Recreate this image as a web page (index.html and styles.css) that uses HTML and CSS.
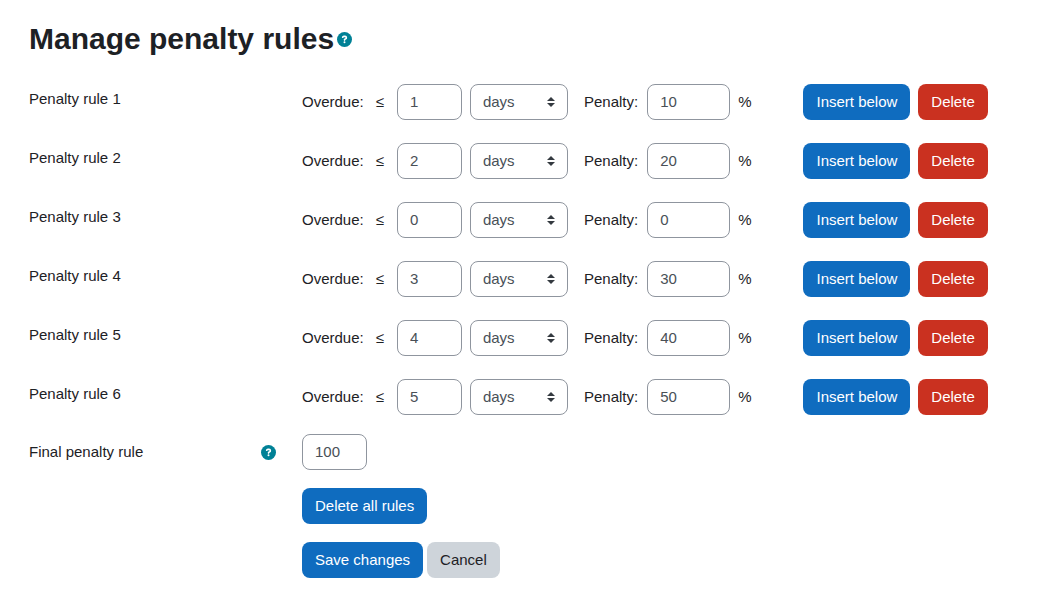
FILE: index.html
```html
<!DOCTYPE html>
<html lang="en">
<head>
<meta charset="utf-8">
<meta name="viewport" content="width=device-width, initial-scale=1">
<title>Manage penalty rules</title>
<link rel="stylesheet" href="styles.css">
</head>
<body>
<svg class="sprite" aria-hidden="true">
  <symbol id="help" viewBox="0 0 512 512">
    <path fill="currentColor" d="M256 0a256 256 0 1 0 0 512a256 256 0 1 0 0-512z"/>
    <path fill="none" stroke="#fff" stroke-width="54" stroke-linecap="round" stroke-linejoin="round" d="M194 180c6-22 20-32 42-32h36c28 0 48 18 48 44c0 20-10 34-28 44l-34 20v20"/>
    <circle fill="#fff" cx="256" cy="352" r="34"/>
  </symbol>
</svg>
<main class="page">
  <header class="heading">
    <h1 class="title">Manage penalty rules</h1>
    <button class="help" type="button" aria-label="Help with Manage penalty rules"><svg class="help-icon"><use href="#help"/></svg></button>
  </header>
  <form class="form">
    <div class="rules">
      <div class="row" role="group" aria-labelledby="rule1">
        <div class="row-label" id="rule1">Penalty rule 1</div>
        <div class="fields">
          <label class="overdue" for="overdue1">Overdue:</label><span class="sign">≤</span>
          <input class="control short" id="overdue1" type="text" value="1">
          <select class="control unit" aria-label="Time unit"><option>days</option><option>weeks</option></select>
          <label class="penalty" for="penalty1">Penalty:</label>
          <input class="control wide" id="penalty1" type="text" value="10"><span class="percent">%</span>
          <button class="btn primary" type="button">Insert below</button>
          <button class="btn danger" type="button">Delete</button>
        </div>
      </div>
      <div class="row" role="group" aria-labelledby="rule2">
        <div class="row-label" id="rule2">Penalty rule 2</div>
        <div class="fields">
          <label class="overdue" for="overdue2">Overdue:</label><span class="sign">≤</span>
          <input class="control short" id="overdue2" type="text" value="2">
          <select class="control unit" aria-label="Time unit"><option>days</option><option>weeks</option></select>
          <label class="penalty" for="penalty2">Penalty:</label>
          <input class="control wide" id="penalty2" type="text" value="20"><span class="percent">%</span>
          <button class="btn primary" type="button">Insert below</button>
          <button class="btn danger" type="button">Delete</button>
        </div>
      </div>
      <div class="row" role="group" aria-labelledby="rule3">
        <div class="row-label" id="rule3">Penalty rule 3</div>
        <div class="fields">
          <label class="overdue" for="overdue3">Overdue:</label><span class="sign">≤</span>
          <input class="control short" id="overdue3" type="text" value="0">
          <select class="control unit" aria-label="Time unit"><option>days</option><option>weeks</option></select>
          <label class="penalty" for="penalty3">Penalty:</label>
          <input class="control wide" id="penalty3" type="text" value="0"><span class="percent">%</span>
          <button class="btn primary" type="button">Insert below</button>
          <button class="btn danger" type="button">Delete</button>
        </div>
      </div>
      <div class="row" role="group" aria-labelledby="rule4">
        <div class="row-label" id="rule4">Penalty rule 4</div>
        <div class="fields">
          <label class="overdue" for="overdue4">Overdue:</label><span class="sign">≤</span>
          <input class="control short" id="overdue4" type="text" value="3">
          <select class="control unit" aria-label="Time unit"><option>days</option><option>weeks</option></select>
          <label class="penalty" for="penalty4">Penalty:</label>
          <input class="control wide" id="penalty4" type="text" value="30"><span class="percent">%</span>
          <button class="btn primary" type="button">Insert below</button>
          <button class="btn danger" type="button">Delete</button>
        </div>
      </div>
      <div class="row" role="group" aria-labelledby="rule5">
        <div class="row-label" id="rule5">Penalty rule 5</div>
        <div class="fields">
          <label class="overdue" for="overdue5">Overdue:</label><span class="sign">≤</span>
          <input class="control short" id="overdue5" type="text" value="4">
          <select class="control unit" aria-label="Time unit"><option>days</option><option>weeks</option></select>
          <label class="penalty" for="penalty5">Penalty:</label>
          <input class="control wide" id="penalty5" type="text" value="40"><span class="percent">%</span>
          <button class="btn primary" type="button">Insert below</button>
          <button class="btn danger" type="button">Delete</button>
        </div>
      </div>
      <div class="row" role="group" aria-labelledby="rule6">
        <div class="row-label" id="rule6">Penalty rule 6</div>
        <div class="fields">
          <label class="overdue" for="overdue6">Overdue:</label><span class="sign">≤</span>
          <input class="control short" id="overdue6" type="text" value="5">
          <select class="control unit" aria-label="Time unit"><option>days</option><option>weeks</option></select>
          <label class="penalty" for="penalty6">Penalty:</label>
          <input class="control wide" id="penalty6" type="text" value="50"><span class="percent">%</span>
          <button class="btn primary" type="button">Insert below</button>
          <button class="btn danger" type="button">Delete</button>
        </div>
      </div>
    </div>
    <div class="row final">
      <div class="final-label">
        <label for="final">Final penalty rule</label>
        <button class="help" type="button" aria-label="Help with Final penalty rule"><svg class="help-icon"><use href="#help"/></svg></button>
      </div>
      <div class="fields"><input class="control short" id="final" type="text" value="100"></div>
    </div>
    <div class="row">
      <div class="actions"><button class="btn primary" type="button">Delete all rules</button></div>
    </div>
    <div class="row">
      <div class="actions">
        <button class="btn primary" type="submit">Save changes</button>
        <button class="btn secondary" type="button">Cancel</button>
      </div>
    </div>
  </form>
</main>
</body>
</html>
```

FILE: styles.css
```css
*,
*::before,
*::after {
  box-sizing: border-box;
}

body {
  margin: 0;
  background: #fff;
  color: #1d2125;
  font: 15px/22px "Liberation Sans", Arial, sans-serif;
}

.sprite {
  display: none;
}

.page {
  padding: 21px 29px 16px;
}

.heading {
  display: flex;
  align-items: center;
  gap: 3px;
  margin-bottom: 27px;
}

.title {
  margin: 0;
  font-size: 30px;
  line-height: 36px;
  font-weight: 700;
}

.help {
  display: block;
  flex: none;
  padding: 1px 0 0;
  border: 0;
  background: none;
  color: #008196;
  cursor: pointer;
}

.help-icon {
  display: block;
  width: 15px;
  height: 15px;
}

.form {
  display: grid;
  gap: 18px;
}

.rules {
  display: grid;
  gap: 23px;
  padding-bottom: 1px;
}

.row {
  display: grid;
  grid-template-columns: 273px 1fr;
}

.row-label {
  padding-top: 4px;
}

.fields {
  display: flex;
  align-items: center;
}

.sign {
  margin: 0 13px 0 12px;
}

.control {
  height: 36px;
  margin: 0;
  padding: 0 12px 1px;
  border: 1px solid #8f959e;
  border-radius: 8px;
  background: #fff;
  color: #495057;
  font: inherit;
}

.short {
  width: 65px;
}

.wide {
  width: 83px;
}

.unit {
  width: 98px;
  margin: 0 16px 0 8px;
  padding-bottom: 0;
  appearance: none;
  background: #fff url("data:image/svg+xml,%3Csvg xmlns='http://www.w3.org/2000/svg' viewBox='0 0 4 5'%3E%3Cpath fill='%23343a40' d='M2 0L0 2h4zm0 5L0 3h4z'/%3E%3C/svg%3E") no-repeat right 12px center / 8px 10px;
}

.penalty {
  margin-right: 9px;
}

.percent {
  margin: 0 52px 0 8px;
}

.btn {
  height: 36px;
  margin: 0;
  padding: 0 13px;
  border: 0;
  border-radius: 8px;
  color: #fff;
  font: inherit;
  white-space: nowrap;
  cursor: pointer;
}

.primary {
  background: #0f6cbf;
}

.danger {
  margin-left: 8px;
  background: #ca3120;
}

.secondary {
  background: #ced4da;
  color: #1d2125;
}

.final-label {
  display: flex;
  align-items: center;
  justify-content: space-between;
  padding-right: 26px;
}

.actions {
  display: flex;
  grid-column: 2;
  gap: 4px;
}

@media (max-width: 1000px) {
  .row {
    grid-template-columns: 1fr;
    row-gap: 8px;
  }

  .fields {
    flex-wrap: wrap;
    row-gap: 8px;
  }

  .actions {
    grid-column: 1;
  }
}
```
